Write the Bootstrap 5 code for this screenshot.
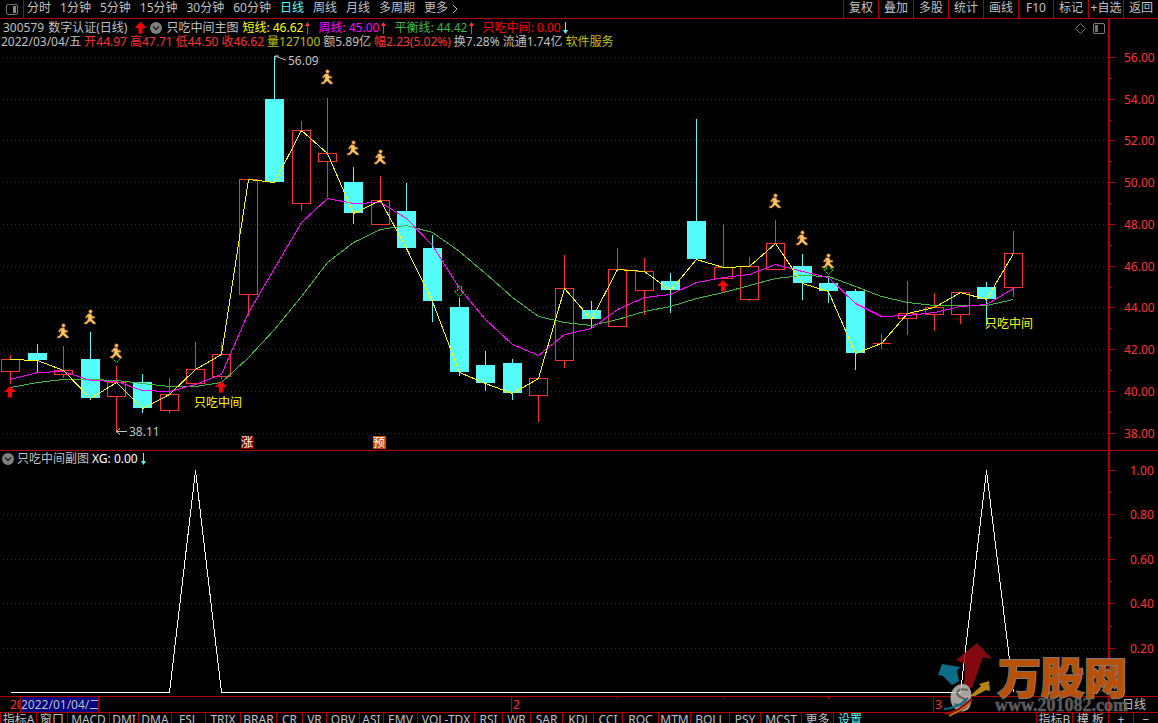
<!DOCTYPE html>
<html lang="zh-CN">
<head>
<meta charset="utf-8">
<meta name="viewport" content="width=device-width, initial-scale=1">
<title>数字认证 300579</title>
<link href="https://cdn.jsdelivr.net/npm/bootstrap@5.3.0/dist/css/bootstrap.min.css" rel="stylesheet">
<style>
:root{--line:#b00000;--up:#ff3232;--down:#54fcfc;--txt:#c0c0c0}
body{background:#000;color:var(--txt);font:12px/14px "Noto Sans","Noto Sans CJK SC",sans-serif}
a,button{color:inherit;text-decoration:none;font:inherit;background:none;border:0;padding:0}
svg{display:block}
.line-b{border-bottom:1px solid var(--line)}
.line-l{border-left:1px solid var(--line)}
.topbar{height:19px;line-height:16px}
.topbar button{line-height:16px}
.logo-cell{width:24px;border-right:1px solid var(--line)}
.periods{gap:9px;padding-left:3px}
.tool{width:35px;text-align:center;padding-bottom:2px}
.pane-main{flex:432 1 0;min-height:0}
.pane-sub{flex:246 1 0;min-height:0}
.axis{width:50px;border-left:2px solid var(--line)}
.head-main{height:31px;padding-top:2px}
.head-sub{height:16px;line-height:16px;padding-left:2px;gap:3px}
.quote-a{gap:4px;padding-left:3px}
.quote-b{gap:3px;padding-left:1px}
.reading{gap:2px;margin-right:4px}
.corner{gap:7px;padding:2px 3px 0 0}
.plot{min-height:0;position:relative}
.plot svg{position:absolute;inset:0;width:100%;height:100%;overflow:visible}
.plot text{font-size:12px}
.c-up{color:var(--up)}.c-down{color:var(--down)}
.c-short{color:#ffff00}.c-week{color:#ff00ff}.c-flat{color:#40b840}.c-red{color:#ff0000}.c-vol{color:#c0c000}
.dates{height:16px;line-height:15px}
.date-cur{margin-left:20px;width:79px;height:15px;background:#000080;border:1px solid var(--line);border-top:0;border-bottom:0;white-space:nowrap;overflow:hidden}
.tabs{height:10px;overflow:hidden;line-height:14px}
.tabs button{border-left:1px solid var(--line);height:14px;white-space:nowrap;overflow:hidden;text-align:center}
.tabs-left{display:grid;grid-template-columns:36px 31px 42px 29px 33px 34px 35px 36px 26px 24px 33px 24px 34px 57px 28px 28px 32px 31px 29px 36px 32px 39px 31px 41px 32px 33px}
.tabs-right{display:grid;grid-template-columns:36px 36px 25px 25px}
.watermark{position:absolute;right:17px;bottom:2px;width:205px;height:82px;pointer-events:none}
</style>
</head>
<body>
<svg width="0" height="0" class="position-absolute">
<defs>
<g id="runner" fill="#ffc468" stroke="#a05814" stroke-width=".6"><circle cx="0.5" cy="-5.5" r="1.8"/><path d="M-2-3.2H1.4L2-1 4.8-.4V1.2H2L2.2 2.6 5.8 6 5.6 7H3.4L0 4-3.4 7H-5.8V5.8L-3.4 4.6-2 2V-.4L-3.4 1.2-4.8.6Z"/></g>
<path id="redup" d="M0-6 5.5-.5V0H2V5.5H-2V0H-5.5V-.5Z" fill="#f00"/>
<path id="greendn" d="M-2-5H2V0H4.5V1L0 5.5-4.5 1V0H-2Z" fill="none" stroke="#00e800" stroke-dasharray="3 1"/>
<g id="thinup"><path d="M2.5 12V1" stroke="currentColor"/><path d="M0 4 2.5 0 5 4Z" fill="currentColor"/></g>
<g id="thindn"><path d="M2.5 0V11" stroke="currentColor"/><path d="M0 8H5L2.5 12Z" fill="currentColor"/></g>
<g id="fold"><circle cx="6" cy="6" r="6" fill="#808080"/><path d="M3 4.5 6 7.5 9 4.5" fill="none" stroke="#202020" stroke-width="1.4"/></g>
</defs>
</svg>
<div class="vh-100 d-flex flex-column overflow-hidden position-relative">
  <header class="topbar line-b d-flex justify-content-between text-nowrap flex-shrink-0">
    <nav class="d-flex">
      <button class="logo-cell d-flex justify-content-center align-items-center" aria-label="侧栏"><svg width="12" height="11"><rect x=".5" y=".5" width="11" height="10" rx="1.5" fill="none" stroke="#707070"/><path d="M7 2H10V9H7Z" fill="#888"/></svg></button>
      <div class="periods d-flex">
        <a href="#">分时</a><a href="#">1分钟</a><a href="#">5分钟</a><a href="#">15分钟</a><a href="#">30分钟</a><a href="#">60分钟</a><a href="#" class="c-down">日线</a><a href="#">周线</a><a href="#">月线</a><a href="#">多周期</a><a href="#">更多<svg class="ms-1 d-inline" width="6" height="10"><path d="M1 1 5 5 1 9" fill="none" stroke="currentColor"/></svg></a>
      </div>
    </nav>
    <nav class="d-flex">
      <button class="tool line-l">复权</button><button class="tool line-l">叠加</button><button class="tool line-l">多股</button><button class="tool line-l">统计</button><button class="tool line-l">画线</button><button class="tool line-l">F10</button><button class="tool line-l">标记</button><button class="tool line-l">+自选</button><button class="tool line-l">返回</button>
    </nav>
  </header>

  <section class="pane-main line-b d-flex">
    <div class="flex-grow-1 d-flex flex-column">
      <div class="head-main d-flex justify-content-between text-nowrap flex-shrink-0">
        <div>
          <div class="quote-a d-flex align-items-center">
            <span>300579</span><span class="me-1">数字认证(日线)</span>
            <svg width="11" height="12"><use href="#redup" x="5.5" y="6"/></svg>
            <svg width="12" height="12"><use href="#fold"/></svg>
            <span>只吃中间主图</span>
            <span class="reading c-short d-flex align-items-center">短线: 46.62<svg class="c-up" width="5" height="12"><use href="#thinup"/></svg></span>
            <span class="reading c-week d-flex align-items-center">周线: 45.00<svg class="c-up" width="5" height="12"><use href="#thinup"/></svg></span>
            <span class="reading c-flat d-flex align-items-center">平衡线: 44.42<svg class="c-up" width="5" height="12"><use href="#thinup"/></svg></span>
            <span class="reading c-red d-flex align-items-center">只吃中间: 0.00<svg class="c-down" width="5" height="12"><use href="#thindn"/></svg></span>
          </div>
          <div class="quote-b d-flex">
            <span>2022/03/04/五</span><span class="c-up">开44.97</span><span class="c-up">高47.71</span><span class="c-up">低44.50</span><span class="c-up">收46.62</span><span class="c-vol">量127100</span><span>额5.89亿</span><span class="c-up">幅2.23(5.02%)</span><span>换7.28%</span><span>流通1.74亿</span><span class="c-vol">软件服务</span>
          </div>
        </div>
        <div class="corner d-flex">
          <svg width="11" height="11"><path d="M5.5.5 10.5 5.5 5.5 10.5.5 5.5Z" fill="none" stroke="#707070"/></svg>
          <svg width="12" height="11"><rect x=".5" y=".5" width="11" height="10" rx="1.5" fill="none" stroke="#808080"/><path d="M2 2H5V9H2Z" fill="#707070"/></svg>
        </div>
      </div>
      <div class="plot flex-grow-1"><svg id="kline"></svg></div>
    </div>
    <div class="axis d-flex flex-column flex-shrink-0">
      <div class="head-main flex-shrink-0"></div>
      <div class="plot flex-grow-1"><svg id="kaxis"></svg></div>
    </div>
  </section>

  <section class="pane-sub line-b d-flex">
    <div class="flex-grow-1 d-flex flex-column">
      <div class="head-sub d-flex align-items-center text-nowrap flex-shrink-0">
        <svg class="flex-shrink-0" width="12" height="12"><use href="#fold"/></svg>
        <span>只吃中间副图</span><span class="text-white">XG: 0.00</span>
        <svg class="c-down" width="5" height="12"><use href="#thindn"/></svg>
      </div>
      <div class="plot flex-grow-1"><svg id="sub"></svg></div>
    </div>
    <div class="axis d-flex flex-column flex-shrink-0">
      <div class="head-sub flex-shrink-0"></div>
      <div class="plot flex-grow-1"><svg id="saxis"></svg></div>
    </div>
  </section>

  <div class="dates line-b d-flex flex-shrink-0">
    <div class="plot flex-grow-1"><svg id="months"></svg><div class="date-cur position-relative">2022/01/04/二</div></div>
    <div class="axis flex-shrink-0 text-center">日线</div>
  </div>

  <footer class="tabs d-flex justify-content-between flex-shrink-0">
    <div class="tabs-left">
      <button>指标A</button><button>窗口</button><button>MACD</button><button>DMI</button><button>DMA</button><button>FSL</button><button>TRIX</button><button>BRAR</button><button>CR</button><button>VR</button><button>OBV</button><button>ASI</button><button>EMV</button><button>VOL-TDX</button><button>RSI</button><button>WR</button><button>SAR</button><button>KDJ</button><button>CCI</button><button>ROC</button><button>MTM</button><button>BOLL</button><button>PSY</button><button>MCST</button><button>更多</button><button class="c-down">设置</button>
    </div>
    <div class="tabs-right"><button>指标B</button><button>模 板</button><button>+</button><button>−</button></div>
  </footer>

  <svg class="watermark" viewBox="936 639 205 82">
    <g opacity=".85">
      <path d="M964 690 965 664 956 660 977 643 992 659 983 657 972 688Z" fill="#9c0a12"/>
      <path d="M952 685 943 676 938 675 942 664 960 667 957 671 959 681Z" fill="#0d80a0"/>
      <path d="M970 696 981 686 979 684 989 681 990 691 986 690 975 696Z" fill="#d89c10"/>
      <path d="M958 685C968 681 973 690 971 699 972 712 961 715 953 707 948 698 951 688 958 685Z" fill="#c4c0bc"/>
      <path d="M968 690C955 687 954 696 963 698 969 701 965 708 954 704" fill="none" stroke="#77716e" stroke-width="2"/>
      <path d="M971 698C963 706 955 711 942 714 954 716 966 711 973 700" fill="#b0151a"/>
      <path d="M968 698C961 705 954 709 944 709" fill="none" stroke="#0d80a0" stroke-width="2"/>
      <path d="M971 702C965 708 958 712 949 716" fill="none" stroke="#d89c10" stroke-width="1.5"/>
    </g>
    <text x="998" y="694" font-size="43" font-weight="900" font-family="Noto Sans CJK SC,sans-serif" fill="#b85008" stroke="#85786e" stroke-width="2" paint-order="stroke">万股网</text>
    <text x="995" y="711" font-size="18" font-weight="700" font-family="Liberation Serif,serif" fill="#6c6c6c" stroke="#6c6c6c" stroke-width=".5" opacity=".85">www.201082.com</text>
  </svg>
</div>
<script>
// Each candle: rising?, high, body top, body bottom, low (plot units, 400 high)
const candles=[[1,355,359,371,384],[0,344,353,360,372],[1,346,370,374,378],[0,332,359,398,400],[1,366,382,396,431],[0,374,382,408,413],[1,378,394,410,413],[1,342,369,383,384],[1,342,354,376,379],[1,179,179,294,316],[0,56,99,182,182],[1,121,130,203,211],[1,98,153,161,197],[0,167,182,213,224],[1,176,200,224,225],[0,183,211,248,248],[0,235,248,301,322],[0,298,307,372,376],[0,351,365,383,391],[0,359,363,393,400],[1,378,378,395,422],[1,255,288,360,368],[0,301,310,319,328],[1,248,269,326,326],[1,258,271,290,315],[0,273,281,290,313],[0,119,221,259,260],[1,224,267,278,278],[1,257,266,299,301],[1,220,243,269,269],[0,254,266,283,300],[0,277,283,291,303],[0,289,291,353,370],[1,334,343,343,349],[1,281,313,318,335],[1,293,307,314,331],[1,292,292,314,324],[0,282,287,299,326],[1,231,253,287,297]];
const closeLine=[359,360,370,398,382,408,394,369,354,179,182,130,153,213,200,248,301,372,383,393,378,288,319,269,271,290,259,267,266,243,283,291,353,343,313,307,292,299,253];
const weekLine=[379,372,371,380,381,390,391,384,374,312,268,222,198,203,202,218,245,288,319,344,355,334,328,309,297,294,282,277,274,264,271,277,303,316,315,312,306,304,288];
const flatLine=[387,382,379,379,380,383,386,386,382,357,329,296,262,242,229,225,232,251,273,297,316,322,325,319,311,306,298,292,285,278,275,276,286,296,302,305,305,305,299];
const runners=[[2,331],[3,317],[4,351],[12,77],[13,148],[14,157],[29,201],[30,238],[31,261]];
const $=id=>document.getElementById(id);
function draw(){
  const k=$('kline').getBoundingClientRect(), s=$('sub').getBoundingClientRect();
  const sx=k.width/1108, X=i=>Math.round((10.4+26.38*i)*sx);
  const Y=v=>Math.round((v-50)*k.height/400), S=v=>Math.round((1-v)*222*s.height/229)+3;
  const line=(x1,y1,x2,y2,c,e='')=>`<path d="M${x1} ${y1}L${x2} ${y2}" stroke="${c}" fill="none" shape-rendering="crispEdges" ${e}/>`;
  const poly=(a,c)=>`<polyline fill="none" stroke="${c}" shape-rendering="crispEdges" points="${a.map((v,i)=>(X(i)+.5)+','+(Y(v)+.5)).join(' ')}"/>`;
  const text=(x,y,t,c)=>`<text x="${x}" y="${y}" fill="${c}">${t}</text>`;
  const use=(id,i,v)=>`<use href="#${id}" x="${X(i)+(id==='greendn'?.5:0)}" y="${Y(v)}"/>`;
  let g='',a='';
  for(let n=0;n<10;n++){
    const y=Y(57+n*41.78)+.5;
    g+=line(3,y,k.width,y,'#a00000','stroke-dasharray="1 3"');
    a+=line(0,y,5,y,'#b00000')+text(14,y+4.5,(56-2*n).toFixed(2),'#ff3232');
    if(n<9){const m=Y(78+n*41.78)+.5;a+=line(0,m,2,m,'#b00000');}
  }
  candles.forEach(([up,h,t,b,l],i)=>{
    const x=X(i)+.5,c=up?'#ff3232':'#54fcfc';
    if(up){
      g+=line(x,Y(h),x,Y(t),c)+line(x,Y(b),x,Y(l),c);
      g+=`<rect x="${x-9}" y="${Y(t)+.5}" width="18" height="${Y(b)-Y(t)}" fill="none" stroke="${c}" shape-rendering="crispEdges"/>`;
      if(t===b)g+=line(x-9,Y(t)+.5,x+9,Y(t)+.5,c);
    }else g+=line(x,Y(h),x,Y(l),c)+`<rect x="${x-9.5}" y="${Y(t)}" width="19" height="${Y(b)-Y(t)}" fill="${c}"/>`;
  });
  g+=poly(flatLine,'#40b840')+poly(weekLine,'#ff00ff')+poly(closeLine,'#ffff00');
  [[4,357],[17,291],[31,269]].forEach(r=>g+=use('greendn',...r));
  runners.forEach(r=>g+=use('runner',...r));
  [[0,392],[8,387],[27,286]].forEach(r=>g+=use('redup',...r));
  g+=text(X(7)-1,Y(407),'只吃中间','#ffff00')+text(X(37)-1,Y(328),'只吃中间','#ffff00');
  g+=text(X(4)+13,Y(436),'38.11','#c0c0c0')+text(X(10)+14,Y(65),'56.09','#c0c0c0');
  g+=`<path d="M${X(4)+11} ${Y(431)+.5}h-11l4-3m-4 3l4 3M${X(10)+12} ${Y(60)}l-11-4h4m-4 0v4" fill="none" stroke="#c0c0c0"/>`;
  [[9,'涨','#800000'],[14,'预','#c84800']].forEach(([i,t,c])=>g+=`<rect x="${X(i)-7}" y="${Y(436)}" width="13" height="13" fill="${c}"/>`+text(X(i)-7,Y(447),t,'#fff'));
  $('kline').innerHTML=g;$('kaxis').innerHTML=a;
  g='';a='';
  for(let n=0;n<5;n++){
    const y=S(1-n*.2)+.5,m=S(.9-n*.2)+.5;
    if(n)g+=line(3,y,s.width,y,'#a00000','stroke-dasharray="1 3"');
    a+=line(0,y,5,y,'#b00000')+line(0,m,2,m,'#b00000')+text(20,y+4.5,(1-n*.2).toFixed(2),'#ff3232');
  }
  const pts=[[0,0],[6,0],[7,1],[8,0],[36,0],[37,1],[38,0]];
  g+=`<polyline fill="none" stroke="#fff" shape-rendering="crispEdges" points="${pts.map(p=>(X(p[0])+.5)+','+(S(p[1])+.5)).join(' ')}"/>`;
  $('sub').innerHTML=g;$('saxis').innerHTML=a;
  g=text(X(0),12,'20','#ff3232');
  [[19,'2'],[35,'3']].forEach(([i,t])=>g+=line(X(i)-.5,0,X(i)-.5,15,'#b00000')+text(X(i)+1,12,t,'#ff3232'));
  [23,27,31].forEach(i=>g+=line(X(i)+.5,0,X(i)+.5,2,'#b00000'));
  $('months').innerHTML=g;
}
draw();
addEventListener('resize',draw);
</script>
<script src="https://cdn.jsdelivr.net/npm/bootstrap@5.3.0/dist/js/bootstrap.bundle.min.js"></script>
</body>
</html>
